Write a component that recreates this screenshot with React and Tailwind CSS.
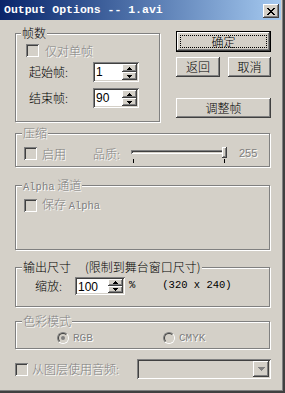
import React from 'react';

// classic win2k bevels
const RAISED = "shadow-[inset_-1px_-1px_0_#404040,inset_1px_1px_0_#ffffff,inset_-2px_-2px_0_#808080]";
const SUNKEN = "shadow-[inset_1px_1px_0_#808080,inset_-1px_-1px_0_#ffffff,inset_2px_2px_0_#404040,inset_-2px_-2px_0_#d4d0c8]";
const DIM = "text-[#808080] [text-shadow:1px_1px_0_#ffffff]";
const MONO = "font-['Liberation_Mono',monospace]";
const SANS = "font-['Liberation_Sans',sans-serif]";

function Arrow({ down, dim, big }) {
  const fill = dim ? '#808080' : '#000000';
  const rows = big ? [7, 5, 3, 1] : [5, 3, 1];
  const w = rows[0];
  const list = down ? rows : [...rows].reverse();
  return (
    <svg width={w} height={list.length} shapeRendering="crispEdges" className="block">
      {list.map((n, i) => (
        <rect key={i} x={(w - n) / 2} y={i} width={n} height={1} fill={fill} />
      ))}
    </svg>
  );
}

function CloseX() {
  const rows = [[0, 6], [1, 5], [2, 4], [3], [2, 4], [1, 5], [0, 6]];
  return (
    <svg width="8" height="7" shapeRendering="crispEdges" className="block">
      {rows.map((xs, y) => xs.map((x) => <rect key={y + '-' + x} x={x} y={y} width={2} height={1} fill="#000" />))}
    </svg>
  );
}

function Check({ dim }) {
  return <div className={`w-[13px] h-[13px] shrink-0 ${dim ? 'bg-[#d4d0c8]' : 'bg-white'} ${SUNKEN}`} />;
}

function Radio({ checked }) {
  return (
    <div className="w-[12px] h-[12px] shrink-0 rounded-full border border-t-[#808080] border-l-[#808080] border-r-white border-b-white">
      <div className="w-full h-full rounded-full border border-t-[#404040] border-l-[#404040] border-r-[#d4d0c8] border-b-[#d4d0c8] bg-[#d4d0c8] flex items-center justify-center">
        {checked && <div className="w-[4px] h-[4px] rounded-full bg-[#808080]" />}
      </div>
    </div>
  );
}

function SpinEdit({ value, className }) {
  return (
    <div className={`flex p-[2px] bg-white ${SUNKEN} ${className}`}>
      <div className={`flex-1 pl-[1px] text-[12px] leading-[16px] ${SANS}`}>{value}</div>
      <div className="w-[15px] flex flex-col">
        <div className={`flex-1 flex items-center justify-center bg-[#d4d0c8] ${RAISED}`}>
          <Arrow />
        </div>
        <div className={`flex-1 flex items-center justify-center bg-[#d4d0c8] ${RAISED}`}>
          <Arrow down />
        </div>
      </div>
    </div>
  );
}

function Btn({ children, className }) {
  return (
    <div className={`flex items-center justify-center bg-[#d4d0c8] ${RAISED} ${className}`}>{children}</div>
  );
}

function Group({ label, labelClass, className, children }) {
  return (
    <div className={`flex flex-col border border-[#808080] shadow-[inset_1px_1px_0_#ffffff,1px_1px_0_#ffffff] ${className}`}>
      <div className={`-mt-[8px] self-start bg-[#d4d0c8] px-[1px] h-[14px] leading-[14px] whitespace-pre ${labelClass}`}>{label}</div>
      {children}
    </div>
  );
}

export default function App() {
  return (
    <div className="w-[285px] h-[393px] overflow-hidden bg-[#d4d0c8] border-r-2 border-b-2 border-[#404040] shadow-[inset_-1px_-1px_0_#808080] text-[12px] font-light text-black font-['Noto_Sans_CJK_SC','Noto_Sans',sans-serif]">
      {/* title bar */}
      <div className="h-[20px] mr-[2px] flex items-start bg-linear-to-r from-[#0a246a] to-[#a6caf0]">
        <span className={`pl-[4px] pt-[2px] text-white font-bold text-[11.5px] leading-[16px] whitespace-pre ${MONO}`}>Output Options -- 1.avi</span>
        <div className={`ml-auto mr-[2px] mt-[4px] w-[16px] h-[14px] flex items-center justify-center bg-[#d4d0c8] ${RAISED}`}>
          <CloseX />
        </div>
      </div>

      <div className="pl-[15px] flex flex-col">
        {/* frames + buttons */}
        <div className="mt-[11px] flex items-start">
          <Group label="帧数" labelClass="ml-[5px]" className="mt-[2px] w-[145px] h-[89px]">
            <div className="mt-[4px] ml-[10px] flex items-center">
              <Check dim />
              <span className={`ml-[6px] leading-[13px] ${DIM}`}>仅对单帧</span>
            </div>
            <div className="mt-[5px] ml-[13px] flex items-center h-[20px]">
              <span className="w-[64px]">起始帧:</span>
              <SpinEdit value="1" className="w-[46px] h-[20px]" />
            </div>
            <div className="mt-[6px] ml-[13px] flex items-center h-[20px]">
              <span className="w-[64px]">结束帧:</span>
              <SpinEdit value="90" className="w-[46px] h-[20px]" />
            </div>
          </Group>

          <div className="ml-[16px] flex flex-col">
            <div className={`w-[95px] h-[21px] border border-black flex bg-[#d4d0c8] ${RAISED}`}>
              <div className="m-[3px] flex-1 border border-dotted border-black flex items-center justify-center leading-[12px]">确定</div>
            </div>
            <div className="mt-[5px] flex">
              <Btn className="w-[44px] h-[20px]">返回</Btn>
              <Btn className="ml-[8px] w-[43px] h-[20px]">取消</Btn>
            </div>
            <Btn className="mt-[21px] w-[95px] h-[20px]">调整帧</Btn>
          </div>
        </div>

        {/* compression */}
        <Group label="压缩" labelClass={`ml-[6px] ${DIM}`} className="mt-[11px] w-[255px] h-[34px]">
          <div className="mt-[7px] ml-[8px] flex items-start">
            <Check dim />
            <span className={`ml-[5px] w-[51px] leading-[13px] ${DIM}`}>启用</span>
            <span className={`w-[38px] leading-[13px] ${DIM}`}>品质:</span>
            <div className="relative w-[96px] h-[18px]">
              <div className={`absolute left-0 right-[2px] top-[3px] h-[4px] ${SUNKEN}`} />
              <div className={`absolute left-[91px] top-0 w-[5px] h-[11px] bg-[#d4d0c8] ${RAISED}`} />
              <div className="absolute left-[2px] top-[12px] w-[1px] h-[4px] bg-black" />
              <div className="absolute left-[93px] top-[12px] w-[1px] h-[4px] bg-black" />
            </div>
            <span className={`ml-[12px] text-[11px] leading-[13px] ${SANS} ${DIM}`}>255</span>
          </div>
        </Group>

        {/* alpha */}
        <Group
          label={<><span className={`${MONO} text-[10.5px]`}>Alpha</span> 通道</>}
          labelClass={`ml-[6px] ${DIM}`}
          className="mt-[18px] w-[255px] h-[65px]"
        >
          <div className="mt-[5px] ml-[8px] flex items-center">
            <Check dim />
            <span className={`ml-[5px] leading-[13px] whitespace-pre ${DIM}`}>
              保存 <span className={`${MONO} text-[10.5px]`}>Alpha</span>
            </span>
          </div>
        </Group>

        {/* output size */}
        <Group
          label={<>输出尺寸<span className="ml-[14px]">(限制到舞台窗口尺寸)</span></>}
          labelClass="ml-[6px]"
          className="mt-[17px] w-[255px] h-[40px]"
        >
          <div className="mt-[3px] ml-[19px] flex items-center h-[18px]">
            <span className="w-[40px]">缩放:</span>
            <SpinEdit value="100" className="w-[50px] h-[18px]" />
            <span className={`ml-[4px] text-[10.5px] ${MONO}`}>%</span>
            <span className={`ml-[27px] text-[10.5px] whitespace-pre ${MONO}`}>(320 x 240)</span>
          </div>
        </Group>

        {/* colour mode */}
        <Group label="色彩模式" labelClass={`ml-[6px] ${DIM}`} className="mt-[14px] w-[255px] h-[28px]">
          <div className="mt-[4px] ml-[41px] flex items-center">
            <Radio checked />
            <span className={`ml-[4px] w-[90px] text-[11px] leading-[12px] ${MONO} ${DIM}`}>RGB</span>
            <Radio />
            <span className={`ml-[4px] text-[11px] leading-[12px] ${MONO} ${DIM}`}>CMYK</span>
          </div>
        </Group>

        {/* audio */}
        <div className="mt-[10px] flex items-center h-[20px]">
          <Check dim />
          <span className={`ml-[4px] w-[105px] ${DIM}`}>从图层使用音频:</span>
          <div className={`w-[134px] h-[20px] p-[2px] flex justify-end bg-[#d4d0c8] ${SUNKEN}`}>
            <div className={`w-[16px] h-[16px] flex items-center justify-center bg-[#d4d0c8] ${RAISED}`}>
              <Arrow down big dim />
            </div>
          </div>
        </div>
      </div>
    </div>
  );
}
